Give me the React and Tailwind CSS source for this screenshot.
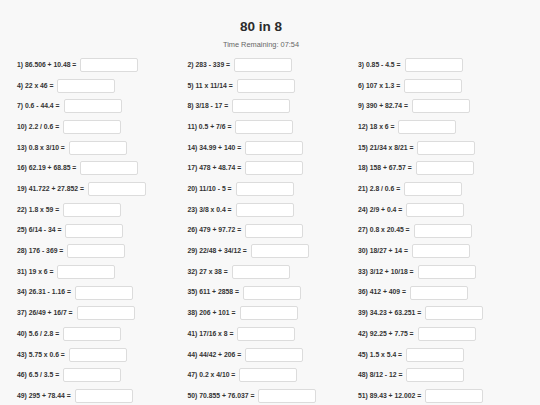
import React from "react";

const problems = [
  "86.506 + 10.48", "283 - 339", "0.85 - 4.5",
  "22 x 46", "11 x 11/14", "107 x 1.3",
  "0.6 - 44.4", "3/18 - 17", "390 + 82.74",
  "2.2 / 0.6", "0.5 + 7/6", "18 x 6",
  "0.8 x 3/10", "34.99 + 140", "21/34 x 8/21",
  "62.19 + 68.85", "478 + 48.74", "158 + 67.57",
  "41.722 + 27.852", "11/10 - 5", "2.8 / 0.6",
  "1.8 x 59", "3/8 x 0.4", "2/9 + 0.4",
  "6/14 - 34", "479 + 97.72", "0.8 x 20.45",
  "176 - 369", "22/48 + 34/12", "18/27 + 14",
  "19 x 6", "27 x 38", "3/12 + 10/18",
  "26.31 - 1.16", "611 + 2858", "412 + 409",
  "26/49 + 16/7", "206 + 101", "34.23 + 63.251",
  "5.6 / 2.8", "17/16 x 8", "92.25 + 7.75",
  "5.75 x 0.6", "44/42 + 206", "1.5 x 5.4",
  "6.5 / 3.5", "0.2 x 4/10", "8/12 - 12",
  "295 + 78.44", "70.855 + 76.037", "89.43 + 12.002",
];

export default function App() {
  return (
    <div
      className="w-[540px] h-[405px] overflow-hidden bg-[#f8f8f8] text-[#333]"
      style={{ fontFamily: '"Liberation Sans", Arial, sans-serif' }}
    >
      <div className="pt-[17.5px] pr-[18px] flex flex-col items-center">
        <h1 className="text-[13.5px] leading-[18px] font-bold text-[#2b2b2b]">80 in 8</h1>
        <div className="mt-[4.5px] text-[7.4px] leading-[10px] text-[#666]">Time Remaining: 07:54</div>
      </div>
      <div className="mt-[8px] pl-[17px] grid grid-cols-[170.5px_170.5px_170.5px] gap-y-[6.7px]">
        {problems.map((p, i) => (
          <div key={i} className="flex items-center h-[14px]">
            <span className="text-[6.8px] font-bold text-[#333] whitespace-nowrap">
              {i + 1}) {p} =
            </span>
            <div className="ml-[4px] w-[58px] h-[14px] bg-white border border-[#dcdcdc] rounded-[2px] shrink-0" />
          </div>
        ))}
      </div>
    </div>
  );
}
